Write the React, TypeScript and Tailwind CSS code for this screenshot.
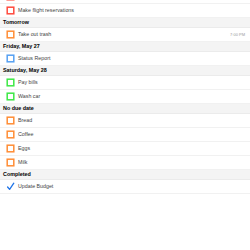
type Task = { text: string; color: string; time?: string; done?: boolean };
type Section = { title?: string; tasks: Task[] };

const RED = "#ff4a3d";
const ORANGE = "#ff8d35";
const BLUE = "#55a0f2";
const GREEN = "#3de845";

const SECTIONS: Section[] = [
  {
    tasks: [
      { text: "", color: RED },
      { text: "Make flight reservations", color: RED },
    ],
  },
  { title: "Tomorrow", tasks: [{ text: "Take out trash", color: ORANGE, time: "7:00 PM" }] },
  { title: "Friday, May 27", tasks: [{ text: "Status Report", color: BLUE }] },
  {
    title: "Saturday, May 28",
    tasks: [
      { text: "Pay bills", color: GREEN },
      { text: "Wash car", color: GREEN },
    ],
  },
  {
    title: "No due date",
    tasks: [
      { text: "Bread", color: ORANGE },
      { text: "Coffee", color: ORANGE },
      { text: "Eggs", color: ORANGE },
      { text: "Milk", color: ORANGE },
    ],
  },
  { title: "Completed", tasks: [{ text: "Update Budget", color: BLUE, done: true }] },
];

function Box({ color }: { color: string }) {
  return (
    <svg width="9" height="9" viewBox="0 0 9 9" className="shrink-0">
      <rect x="1.2" y="1.2" width="6.6" height="6.6" fill="#fff" stroke={color} strokeWidth="1.5" />
    </svg>
  );
}

function Check() {
  return (
    <svg width="9" height="9" viewBox="0 0 9 9" className="shrink-0">
      <path d="M1.6 5 L3.6 7.4 L7.8 1.2" fill="none" stroke="#1f74e8" strokeWidth="1.3" strokeLinecap="round" strokeLinejoin="round" />
    </svg>
  );
}

function TaskRow({ task }: { task: Task }) {
  return (
    <div className="flex h-[14px] flex-col">
      <div className="flex flex-1 items-center pl-[6px] pr-[5px]">
        {task.done ? <Check /> : <Box color={task.color} />}
        <span className="ml-[3px] flex-1 text-[5.3px] leading-none text-[#444444]">{task.text}</span>
        {task.time ? <span className="text-[4px] leading-none text-[#9a9a9a]">{task.time}</span> : null}
      </div>
      <div className="h-px bg-[#f1f1f1]" />
    </div>
  );
}

export default function App() {
  return (
    <div
      className="h-[250px] w-[250px] overflow-hidden bg-white"
      style={{ fontFamily: '"Liberation Sans", Arial, sans-serif' }}
    >
      <div className="-mt-[10px]">
        {SECTIONS.map((s, i) => (
          <div key={i}>
            {s.title ? (
              <div className="flex h-[10px] flex-col bg-[#f4f4f4]">
                <div className="flex flex-1 items-center px-[3px] text-[5.4px] font-bold leading-none text-black">
                  {s.title}
                </div>
                <div className="h-px bg-[#ebebeb]" />
              </div>
            ) : null}
            {s.tasks.map((t, j) => (
              <TaskRow key={j} task={t} />
            ))}
          </div>
        ))}
      </div>
    </div>
  );
}
